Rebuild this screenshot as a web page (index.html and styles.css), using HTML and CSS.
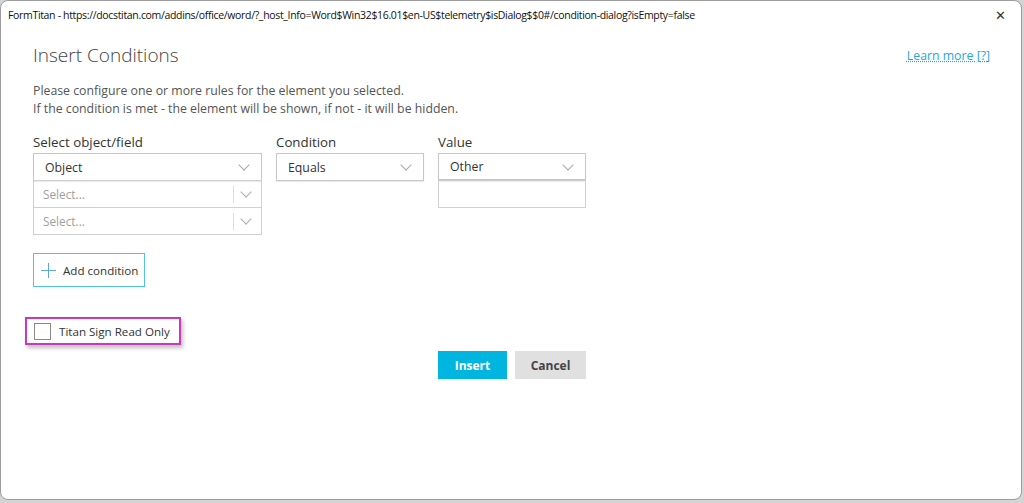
FILE: index.html
```html
<!DOCTYPE html>
<html>
<head>
<title>Insert Conditions</title>
<link rel="stylesheet" href="styles.css">
</head>
<body>

<div class="window">

<div class="titlebar">
<span class="titletext">FormTitan - https://docstitan.com/addins/office/word/?_host_Info=Word$Win32$16.01$en-US$telemetry$isDialog$$0#/condition-dialog?isEmpty=false</span>
<span class="closebtn">&#x2715;</span>
</div>

<div class="content">

<div class="header">
<h1>Insert Conditions</h1>
<a class="learnmore" href="#">Learn more [?]</a>
</div>

<p class="intro">Please configure one or more rules for the element you selected.<br>
If the condition is met - the element will be shown, if not - it will be hidden.</p>

<div class="fields">

<div class="col col_object">
<div class="label">Select object/field</div>
<div class="box first"><span>Object</span><span class="chev"></span></div>
<div class="box placeholder"><span>Select...</span><span class="sep"></span><span class="chev"></span></div>
<div class="box placeholder"><span>Select...</span><span class="sep"></span><span class="chev"></span></div>
</div>

<div class="col col_small">
<div class="label">Condition</div>
<div class="box first"><span>Equals</span><span class="chev"></span></div>
</div>

<div class="col col_small">
<div class="label">Value</div>
<div class="box first value"><span>Other</span><span class="chev"></span></div>
<div class="box empty"></div>
</div>

</div>

<button class="addcond"><span class="plus"></span>Add condition</button>

<label class="readonly">
<span class="checkbox"></span>
Titan Sign Read Only
</label>

<div class="actions">
<button class="btn_insert">Insert</button>
<button class="btn_cancel">Cancel</button>
</div>

</div>
</div>

</body>
</html>
```

FILE: styles.css
```css
body{
margin:0;
background-color:#d4d4d4;
font-family:"Open Sans", "Noto Sans", sans-serif;
color:#333;
}

.window{
box-sizing:border-box;
width:1022px;
height:500px;
background-color:white;
border:1px solid #9c9c9c;
border-radius:8px;
overflow:hidden;
}

.titlebar{
height:27px;
display:flex;
align-items:center;
justify-content:space-between;
padding-left:7px;
padding-right:15px;
}

.titletext{
font-size:10.5px;
letter-spacing:-0.33px;
color:#111;
white-space:nowrap;
}

.closebtn{
font-size:13px;
color:#333;
}

.content{
padding-left:32px;
font-size:12.3px;
}

.header{
display:flex;
justify-content:space-between;
align-items:center;
margin-top:13px;
padding-right:31px;
}

h1{
margin:0;
font-size:19px;
font-weight:300;
line-height:28px;
color:#444;
}

.learnmore{
font-size:12.3px;
color:#2aa6d8;
text-decoration:underline;
text-decoration-style:dotted;
}

.intro{
margin:13px 0 0 0;
line-height:18px;
color:#555;
}

.fields{
display:flex;
gap:14px;
margin-top:14px;
}

.col_object{
width:229px;
}

.col_small{
width:148px;
}

.label{
font-size:13.3px;
line-height:20px;
height:21px;
color:#333;
}

.box{
box-sizing:border-box;
height:28px;
border:1px solid #d0d0d0;
display:flex;
align-items:center;
padding-left:11px;
color:#333;
white-space:nowrap;
}

.box + .box{
margin-top:-1px;
}

.box span:first-child{
flex:1;
}

.box.first{
border-color:#c8c8c8;
box-shadow:0 1px 1px rgba(0,0,0,0.08);
}

.box.value{
border-bottom:2px solid #c4c4c4;
}

.box.placeholder{
padding-left:9px;
color:#a0a0a0;
font-size:11.8px;
}

.sep{
width:1px;
height:17px;
background-color:#ddd;
margin-right:8px;
}

.chev{
width:7px;
height:7px;
border-right:1px solid #aaa;
border-bottom:1px solid #aaa;
transform:rotate(45deg);
margin:-4px 13px 0 0;
}

.placeholder .chev{
margin-right:11px;
}

.addcond{
display:flex;
align-items:center;
box-sizing:border-box;
width:112px;
height:34px;
margin-top:18px;
padding:0 0 0 7px;
background-color:white;
border:1px solid #4fc3e8;
font-family:inherit;
font-size:11.6px;
color:#333;
white-space:nowrap;
}

.plus{
position:relative;
width:15px;
height:15px;
margin-right:7px;
}

.plus:before,.plus:after{
content:"";
position:absolute;
background-color:#5aa9d6;
}

.plus:before{
left:7px;
top:0;
width:1px;
height:15px;
}

.plus:after{
top:7px;
left:0;
width:15px;
height:1px;
}

.readonly{
display:flex;
align-items:center;
box-sizing:border-box;
width:156px;
height:28px;
margin:30px 0 0 -8px;
padding-left:7px;
border:2px solid #c939b8;
box-shadow:2px 3px 4px rgba(0,0,0,0.25);
font-size:11.6px;
color:#333;
white-space:nowrap;
}

.checkbox{
box-sizing:border-box;
width:17px;
height:17px;
border:1px solid #8a8a8a;
margin-right:8px;
}

.actions{
display:flex;
justify-content:flex-end;
gap:8px;
width:553px;
margin-top:6px;
}

.actions button{
height:28px;
border:none;
font-family:inherit;
font-size:12px;
font-weight:bold;
}

.btn_insert{
width:69px;
background-color:#00b6e0;
color:white;
}

.btn_cancel{
width:71px;
background-color:#e0e0e0;
color:#444;
}
```
